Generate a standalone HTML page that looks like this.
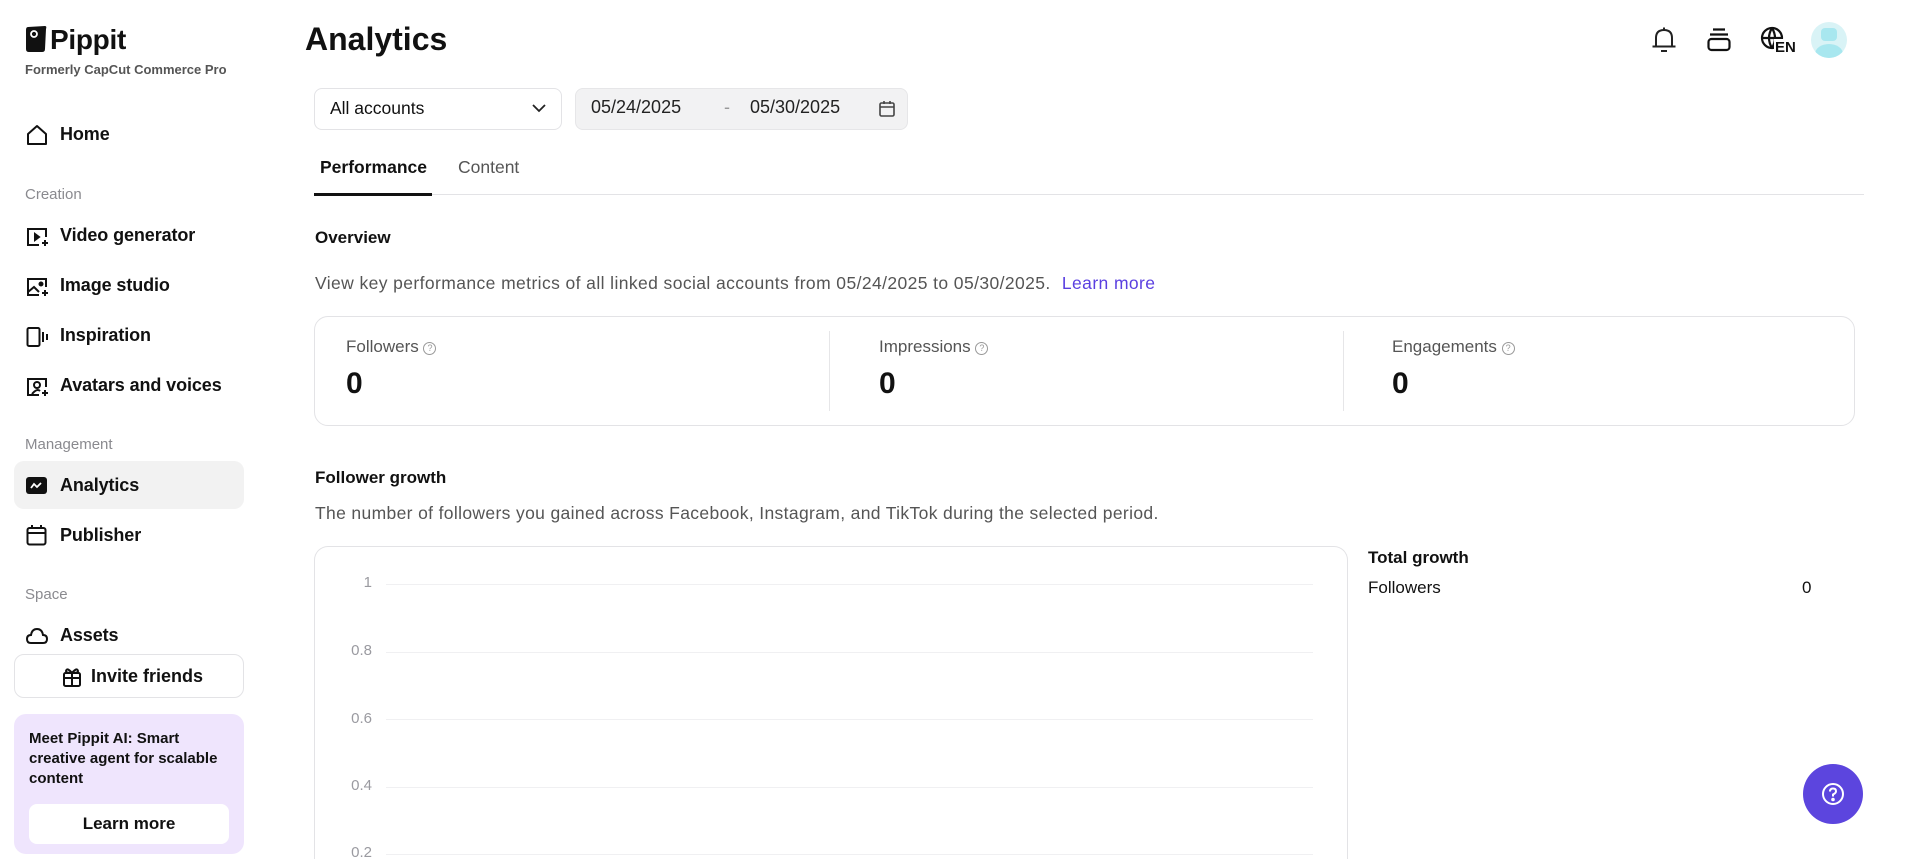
<!DOCTYPE html>
<html><head><meta charset="utf-8"><style>
*{box-sizing:border-box;margin:0;padding:0}
html,body{width:1907px;height:859px;overflow:hidden}
body{background:#fff;font-family:"Liberation Sans",sans-serif;color:#111}
#w{position:relative;width:1907px;height:859px;overflow:hidden}
.a{position:absolute;white-space:nowrap}
.nav{font-size:18px;color:#111;font-weight:bold;letter-spacing:-0.1px}
.sec{font-size:15px;color:#8a8a8f}
.ic{position:absolute}
.grid{position:absolute;left:386px;width:927px;height:1px;background:#f0f0f2}
.yl{position:absolute;font-size:15px;color:#9a9aa0;text-align:right;width:50px;left:322px}
.q{display:inline-block;width:13px;height:13px;border:1.3px solid #999;border-radius:50%;font-size:9px;line-height:11px;text-align:center;color:#999;vertical-align:1px}
</style></head><body><div id="w">
<svg class="ic" style="left:25px;top:25px" width="22" height="28" viewBox="0 0 22 28"><path d="M3 2 L20 1 Q22 1 21 4 L20 24 Q20 27 17 27 L4 27 Q1 27 1 24 L1 5 Q1 2 3 2Z" fill="#111"/><circle cx="9" cy="9" r="3" fill="none" stroke="#fff" stroke-width="1.8"/></svg>
<div class="a" style="left:50px;top:24px;font-size:28px;font-weight:bold;letter-spacing:-0.3px">Pippit</div>
<div class="a" style="left:25px;top:62px;font-size:13px;font-weight:bold;color:#555">Formerly CapCut Commerce Pro</div>

<svg class="ic" style="left:26px;top:124px" width="22" height="22" viewBox="0 0 22 22" fill="none" stroke="#111" stroke-width="2" stroke-linejoin="round"><path d="M2 10 L11 2 L20 10 L20 20 L2 20Z"/></svg>
<div class="a nav" style="left:60px;top:124px">Home</div>
<div class="a sec" style="left:25px;top:186px">Creation</div>

<svg class="ic" style="left:26px;top:226px" width="23" height="22" viewBox="0 0 23 22" fill="none" stroke="#111" stroke-width="2"><path d="M13 19 H2 V3 H20 V11"/><path d="M9 8 L13 11 L9 14Z" fill="#111"/><path d="M19 14 v6 M16 17 h6" stroke-width="2"/></svg>
<div class="a nav" style="left:60px;top:225px">Video generator</div>
<svg class="ic" style="left:26px;top:276px" width="23" height="22" viewBox="0 0 23 22" fill="none" stroke="#111" stroke-width="2"><path d="M13 19 H2 V3 H20 V11"/><path d="M2 16 L8 11 L13 16"/><circle cx="15" cy="8" r="1.5" fill="#111"/><path d="M19 14 v6 M16 17 h6"/></svg>
<div class="a nav" style="left:60px;top:275px">Image studio</div>
<svg class="ic" style="left:26px;top:326px" width="23" height="22" viewBox="0 0 23 22" fill="none" stroke="#111" stroke-width="2"><rect x="1.5" y="2" width="12" height="18" rx="1.5"/><path d="M17 6 V16 M21 8 V14"/></svg>
<div class="a nav" style="left:60px;top:325px">Inspiration</div>
<svg class="ic" style="left:26px;top:376px" width="23" height="22" viewBox="0 0 23 22" fill="none" stroke="#111" stroke-width="2"><path d="M13 19 H2 V3 H20 V11"/><circle cx="11" cy="9" r="3"/><path d="M6 18 Q11 12 14 15"/><path d="M19 14 v6 M16 17 h6"/></svg>
<div class="a nav" style="left:60px;top:375px">Avatars and voices</div>
<div class="a sec" style="left:25px;top:436px">Management</div>

<div class="a" style="left:14px;top:461px;width:230px;height:48px;background:#f2f2f2;border-radius:10px"></div>
<svg class="ic" style="left:26px;top:477px" width="21" height="17" viewBox="0 0 21 17"><rect width="21" height="17" rx="3" fill="#111"/><path d="M5 11 L8 7 L11 10 L15 6" stroke="#fff" stroke-width="1.8" fill="none"/></svg>
<div class="a nav" style="left:60px;top:475px">Analytics</div>
<svg class="ic" style="left:26px;top:524px" width="21" height="22" viewBox="0 0 21 22" fill="none" stroke="#111" stroke-width="2"><rect x="1.5" y="4" width="18" height="16.5" rx="2"/><path d="M1.5 9 H19.5 M6 1 V5 M15 1 V5"/></svg>
<div class="a nav" style="left:60px;top:525px">Publisher</div>
<div class="a sec" style="left:25px;top:586px">Space</div>
<svg class="ic" style="left:26px;top:627px" width="22" height="18" viewBox="0 0 22 18" fill="none" stroke="#111" stroke-width="2"><path d="M5 16 Q1 16 1 12 Q1 8 5 8 Q6 2 11 2 Q16 2 17 8 Q21 8 21 12 Q21 16 17 16Z"/></svg>
<div class="a nav" style="left:60px;top:625px">Assets</div>

<div class="a" style="left:14px;top:654px;width:230px;height:44px;border:1px solid #e3e3e6;border-radius:10px"></div>
<svg class="ic" style="left:62px;top:666px" width="20" height="21" viewBox="0 0 20 21" fill="none" stroke="#111" stroke-width="2"><rect x="2" y="7" width="16" height="13" rx="1.5"/><path d="M2 12 H18 M10 7 V20 M10 7 Q5 1 4 5 Q4 7 10 7 Q16 7 16 5 Q15 1 10 7"/></svg>
<div class="a" style="left:91px;top:666px;font-size:18px;font-weight:bold">Invite friends</div>

<div class="a" style="left:14px;top:714px;width:230px;height:140px;background:#efe5fd;border-radius:12px"></div>
<div class="a" style="left:29px;top:729px;font-size:15px;font-weight:bold;line-height:20px;white-space:normal;width:190px">Meet Pippit AI: Smart creative agent for scalable content</div>
<div class="a" style="left:29px;top:804px;width:200px;height:40px;background:#fff;border-radius:8px;font-size:17px;font-weight:bold;text-align:center;line-height:40px">Learn more</div>

<div class="a" style="left:305px;top:21px;font-size:32px;font-weight:bold">Analytics</div>
<svg class="ic" style="left:1651px;top:26px" width="26" height="27" viewBox="0 0 26 27" fill="none" stroke="#222" stroke-width="2"><path d="M5 20 V12 Q5 4 13 4 Q21 4 21 12 V20 M1.5 20.5 H24.5 M10 25 H16 M13 1.5 V4"/></svg>
<svg class="ic" style="left:1707px;top:27px" width="24" height="25" viewBox="0 0 24 25" fill="none" stroke="#111" stroke-width="2.2"><path d="M6 2.5 H18 M3 7.5 H21"/><rect x="1.5" y="12" width="21" height="11" rx="3"/></svg>
<svg class="ic" style="left:1760px;top:26px" width="24" height="24" viewBox="0 0 24 24" fill="none" stroke="#111" stroke-width="2.2"><circle cx="12" cy="12" r="10"/><path d="M2 12 H22 M12 2 Q6 12 12 22 M12 2 Q18 12 12 22"/></svg>
<div class="a" style="left:1774px;top:39px;font-size:15px;font-weight:bold;background:#fff;padding-left:1px">EN</div>
<div class="a" style="left:1811px;top:22px;width:36px;height:36px;border-radius:50%;background:#d9f3f6;overflow:hidden"><div style="position:absolute;left:10px;top:6px;width:16px;height:13px;background:#a8e7ef;border-radius:4px"></div><div style="position:absolute;left:4px;top:22px;width:28px;height:20px;background:#a8e7ef;border-radius:50%"></div></div>

<div class="a" style="left:314px;top:88px;width:248px;height:42px;border:1px solid #e3e3e6;border-radius:8px"></div>
<div class="a" style="left:330px;top:98px;font-size:17.5px">All accounts</div>
<svg class="ic" style="left:532px;top:103px" width="14" height="10" viewBox="0 0 14 10" fill="none" stroke="#222" stroke-width="1.8"><path d="M1 2 L7 8 L13 2"/></svg>
<div class="a" style="left:575px;top:88px;width:333px;height:42px;background:#f2f2f3;border:1px solid #e6e6e8;border-radius:8px"></div>
<div class="a" style="left:591px;top:97px;font-size:18px;color:#222">05/24/2025</div>
<div class="a" style="left:724px;top:97px;font-size:18px;color:#999">-</div>
<div class="a" style="left:750px;top:97px;font-size:18px;color:#222">05/30/2025</div>
<svg class="ic" style="left:879px;top:100px" width="16" height="17" viewBox="0 0 16 17" fill="none" stroke="#444" stroke-width="1.6"><rect x="1" y="3" width="14" height="13" rx="1.5"/><path d="M1 7 H15 M5 1 V4 M11 1 V4"/></svg>

<div class="a" style="left:320px;top:157px;font-size:17.5px;font-weight:bold;color:#111">Performance</div>
<div class="a" style="left:458px;top:157px;font-size:17.5px;color:#555">Content</div>
<div class="a" style="left:314px;top:194px;width:1550px;height:1px;background:#e3e3e6"></div>
<div class="a" style="left:314px;top:193px;width:118px;height:3px;background:#111"></div>

<div class="a" style="left:315px;top:228px;font-size:17px;font-weight:bold">Overview</div>
<div class="a" style="left:315px;top:273px;font-size:17.5px;color:#555;letter-spacing:0.4px">View key performance metrics of all linked social accounts from 05/24/2025 to 05/30/2025. <span style="color:#5a3fe0;margin-left:6px">Learn more</span></div>

<div class="a" style="left:314px;top:316px;width:1541px;height:110px;border:1px solid #e3e3e6;border-radius:14px"></div>
<div class="a" style="left:829px;top:331px;width:1px;height:80px;background:#e6e6e8"></div>
<div class="a" style="left:1343px;top:331px;width:1px;height:80px;background:#e6e6e8"></div>
<div class="a" style="left:346px;top:337px;font-size:17px;color:#555">Followers <span class="q">?</span></div>
<div class="a" style="left:346px;top:367px;font-size:30px;font-weight:bold">0</div>
<div class="a" style="left:879px;top:337px;font-size:17px;color:#555">Impressions <span class="q">?</span></div>
<div class="a" style="left:879px;top:367px;font-size:30px;font-weight:bold">0</div>
<div class="a" style="left:1392px;top:337px;font-size:17px;color:#555">Engagements <span class="q">?</span></div>
<div class="a" style="left:1392px;top:367px;font-size:30px;font-weight:bold">0</div>

<div class="a" style="left:315px;top:468px;font-size:17px;font-weight:bold">Follower growth</div>
<div class="a" style="left:315px;top:503px;font-size:17.5px;color:#555;letter-spacing:0.35px">The number of followers you gained across Facebook, Instagram, and TikTok during the selected period.</div>

<div class="a" style="left:314px;top:546px;width:1034px;height:313px;border:1px solid #e3e3e6;border-bottom:none;border-radius:14px 14px 0 0"></div>
<div class="yl" style="top:574px">1</div><div class="grid" style="top:584px"></div>
<div class="yl" style="top:642px">0.8</div><div class="grid" style="top:652px"></div>
<div class="yl" style="top:710px">0.6</div><div class="grid" style="top:719px"></div>
<div class="yl" style="top:777px">0.4</div><div class="grid" style="top:787px"></div>
<div class="yl" style="top:844px">0.2</div><div class="grid" style="top:854px"></div>

<div class="a" style="left:1368px;top:548px;font-size:17px;font-weight:bold">Total growth</div>
<div class="a" style="left:1368px;top:578px;font-size:17px">Followers</div>
<div class="a" style="left:1802px;top:578px;font-size:17px">0</div>

<div class="a" style="left:1803px;top:764px;width:60px;height:60px;border-radius:50%;background:#5c45de"></div>
<svg class="ic" style="left:1821px;top:782px" width="24" height="24" viewBox="0 0 24 24" fill="none" stroke="#fff" stroke-width="2"><circle cx="12" cy="12" r="10"/><path d="M9 9.5 Q9 6.5 12 6.5 Q15 6.5 15 9.2 Q15 11 12 12.5 V14.5"/><circle cx="12" cy="17.5" r="0.8" fill="#fff"/></svg>
</div></body></html>
